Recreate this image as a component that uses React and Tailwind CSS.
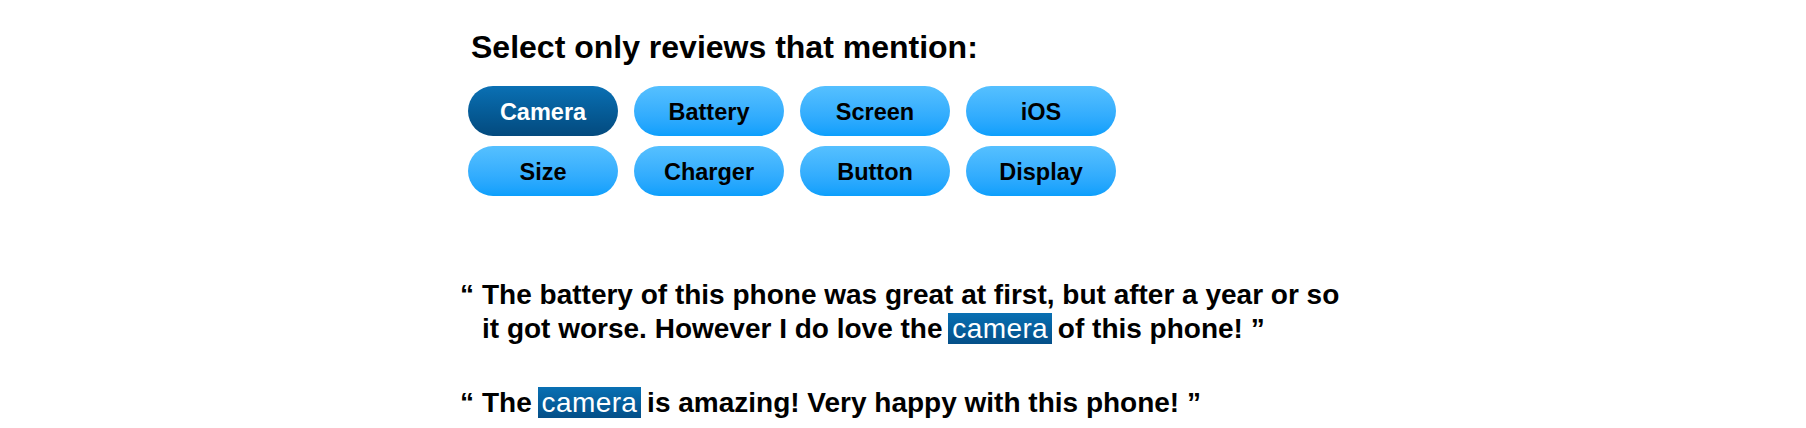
import { useState } from "react";

const TOPICS = ["Camera", "Battery", "Screen", "iOS", "Size", "Charger", "Button", "Display"];

const Highlight = ({ children }) => (
  <span className="px-[4px] -mx-[2px] font-normal tracking-[0.4px] text-white bg-gradient-to-b from-[#0970b3] to-[#044f88]">
    {children}
  </span>
);

const Review = ({ children, className = "" }) => (
  <div className={`flex text-[28px] leading-[34px] font-bold text-black ${className}`}>
    <span className="w-[22px] flex-shrink-0">“</span>
    <p>{children} ”</p>
  </div>
);

export default function App() {
  const [selected, setSelected] = useState("Camera");

  return (
    <div className="w-[1806px] h-[428px] bg-white overflow-hidden font-['Liberation_Sans',Arial,sans-serif]">
      <div className="pl-[460px] pt-[29px]">
        {/* Heading */}
        <h1 className="pl-[11px] text-[32px] leading-[36px] font-bold text-black">
          Select only reviews that mention:
        </h1>

        {/* Topic pills */}
        <div className="ml-[8px] mt-[21px] grid grid-cols-[repeat(4,150px)] gap-x-[16px] gap-y-[10px]">
          {TOPICS.map((t) => (
            <button
              key={t}
              onClick={() => setSelected(t)}
              className={`h-[50px] pt-[3px] rounded-full flex items-center justify-center text-[23.5px] font-bold ${
                selected === t
                  ? "bg-gradient-to-b from-[#0a70b4] to-[#034a7e] text-white"
                  : "bg-gradient-to-b from-[#55c0ff] to-[#0a9ffc] text-black"
              }`}
            >
              {t}
            </button>
          ))}
        </div>

        {/* Reviews */}
        <div className="mt-[82px] w-[900px]">
          <Review>
            The battery of this phone was great at first, but after a year or so it got worse. However I do
            love the <Highlight>camera</Highlight> of this phone!
          </Review>
          <Review className="mt-[40px]">
            The <Highlight>camera</Highlight> is amazing! Very happy with this phone!
          </Review>
        </div>
      </div>
    </div>
  );
}
